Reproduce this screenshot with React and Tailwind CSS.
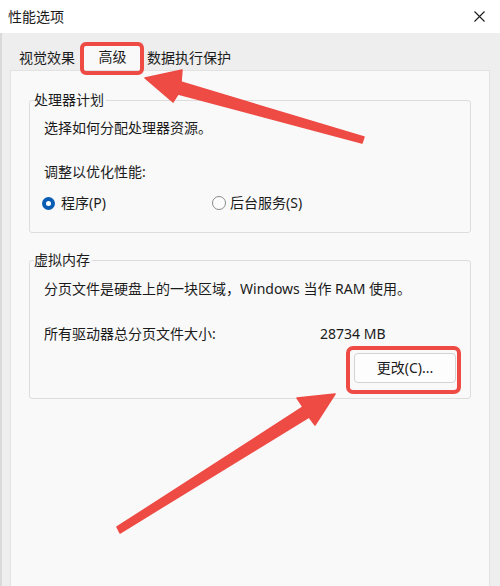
import React from "react";

function Radio({ checked }) {
  if (checked) {
    return (
      <span className="flex h-[13px] w-[13px] items-center justify-center rounded-full bg-[#0a5db3]">
        <span className="h-[5px] w-[5px] rounded-full bg-white" />
      </span>
    );
  }
  return <span className="h-[14px] w-[14px] rounded-full border border-[#8a8a8a] bg-[#fcfcfc]" />;
}

export default function App() {
  return (
    <div className="relative flex h-[586px] w-[500px] flex-col overflow-hidden bg-[#eeeeee] text-[14px] leading-[20px] text-[#1b1b1b] font-['Noto_Sans','Noto_Sans_CJK_SC',sans-serif]">
      {/* title bar */}
      <div className="flex h-[33px] shrink-0 items-center justify-between bg-white pl-[8px] pr-[15px]">
        <span className="text-[14px]">性能选项</span>
        <svg width="11" height="11" viewBox="0 0 11 11" className="text-[#1b1b1b]">
          <path d="M0.5 0.5 L10.5 10.5 M10.5 0.5 L0.5 10.5" stroke="currentColor" strokeWidth="1.1" fill="none" />
        </svg>
      </div>

      {/* body */}
      <div className="flex flex-1 flex-col border-l-[2px] border-[#d9d9d9]">
        {/* tabs */}
        <div className="flex h-[37px] shrink-0 items-end pl-[10px]">
          <div className="flex h-[24px] items-center px-[7px]">视觉效果</div>
          <div className="flex h-[28px] w-[61px] items-center justify-center border border-b-0 border-[#e2e2e2] bg-[#f9f9f9]">
            高级
          </div>
          <div className="flex h-[24px] items-center pl-[4px]">数据执行保护</div>
        </div>

        {/* panel */}
        <div className="ml-[8px] mr-[10px] flex flex-1 flex-col border border-b-0 border-[#e2e2e2] bg-[#f9f9f9] px-[18px] pt-[19px]">
          <fieldset className="rounded-[3px] border border-[#dddddd] px-[14px] pb-[19px]">
            <legend className="-ml-[10px] pr-[2px] leading-[20px]">处理器计划</legend>
            <p className="mt-[8px]">选择如何分配处理器资源。</p>
            <p className="mt-[24px]">调整以优化性能:</p>
            <div className="mt-[11px] flex h-[20px] items-center">
              <label className="-ml-[2px] flex w-[170px] items-center gap-[6px]">
                <Radio checked />
                <span>程序(P)</span>
              </label>
              <label className="flex items-center gap-[4px]">
                <Radio />
                <span>后台服务(S)</span>
              </label>
            </div>
          </fieldset>

          <fieldset className="mt-[17px] rounded-[3px] border border-[#dddddd] px-[14px] pb-[15px]">
            <legend className="-ml-[10px] pr-[2px] leading-[20px]">虚拟内存</legend>
            <p className="mt-[9px]">分页文件是硬盘上的一块区域，Windows 当作 RAM 使用。</p>
            <div className="mt-[25px] flex">
              <span className="w-[276px]">所有驱动器总分页文件大小:</span>
              <span>28734 MB</span>
            </div>
            <div className="mt-[9px] flex justify-end">
              <button className="flex h-[30px] w-[102px] items-center justify-center rounded-[4px] border border-[#d3d3d3] bg-[#fdfdfd]">
                更改(C)...
              </button>
            </div>
          </fieldset>
        </div>
      </div>

      {/* annotations */}
      <div className="pointer-events-none absolute left-[80px] top-[42px] h-[33px] w-[64px] rounded-[6px] border-[4px] border-[#ee4b45]" />
      <div className="pointer-events-none absolute left-[346px] top-[346px] h-[48px] w-[115px] rounded-[7px] border-[4px] border-[#ee4b45]" />
      <svg className="pointer-events-none absolute left-0 top-0" width="500" height="586" viewBox="0 0 500 586">
        <polygon
          fill="#ee4b45"
          strokeLinejoin="round"
          stroke="#ee4b45"
          strokeWidth="1.5"
          points="145,78 182,70 181,82 364,137 362,143 178,94 173,102"
        />
        <polygon
          fill="#ee4b45"
          strokeLinejoin="round"
          stroke="#ee4b45"
          strokeWidth="1.5"
          points="335,394 297,398 303,407 117,527 120,533 309,417 315,425"
        />
      </svg>
    </div>
  );
}
